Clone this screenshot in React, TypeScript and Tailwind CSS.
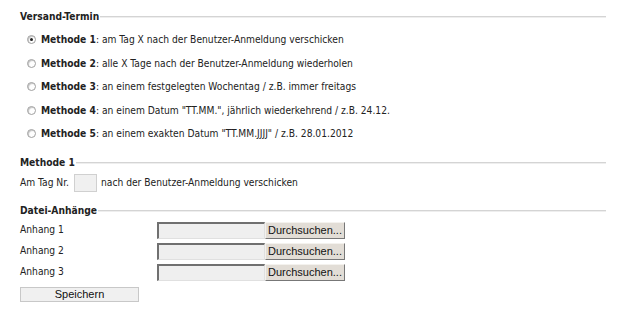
import React, { useState } from 'react';

const methods = [
  { n: 1, text: 'am Tag X nach der Benutzer-Anmeldung verschicken' },
  { n: 2, text: 'alle X Tage nach der Benutzer-Anmeldung wiederholen' },
  { n: 3, text: 'an einem festgelegten Wochentag / z.B. immer freitags' },
  { n: 4, text: 'an einem Datum "TT.MM.", jährlich wiederkehrend / z.B. 24.12.' },
  { n: 5, text: 'an einem exakten Datum "TT.MM.JJJJ" / z.B. 28.01.2012' },
];

function Legend({ title, className = '' }: { title: string; className?: string }) {
  return (
    <div className={`flex items-center h-[14px] ${className}`}>
      <span className="font-bold text-[#222]">{title}</span>
      <div className="flex-1 h-[2px] border-t border-[#d4d4d4] bg-[#eee] ml-px" />
    </div>
  );
}

function Radio({ checked }: { checked: boolean }) {
  return (
    <span className="w-[9px] h-[9px] rounded-full border border-[#a0a0a0] bg-white flex items-center justify-center shrink-0 shadow-[inset_1px_1px_1px_#c4c4c4]">
      {checked && <span className="w-[3px] h-[3px] rounded-full bg-[#222]" />}
    </span>
  );
}

export default function App() {
  const [method, setMethod] = useState(1);

  return (
    <div
      className="w-[624px] h-[326px] bg-white text-[10.2px] text-[#222] pl-5 pr-[18px] pt-[10px]"
      style={{ fontFamily: '"DejaVu Sans Condensed", "DejaVu Sans", Verdana, sans-serif' }}
    >
      <Legend title="Versand-Termin" />

      <div className="flex flex-col mt-[4px] pl-[7px]">
        {methods.map((m) => (
          <label key={m.n} className="flex items-center h-[23.5px] cursor-pointer" onClick={() => setMethod(m.n)}>
            <Radio checked={method === m.n} />
            <span className="ml-[5px]">
              <b>Methode {m.n}</b>: {m.text}
            </span>
          </label>
        ))}
      </div>

      <Legend title="Methode 1" className="mt-[10.5px]" />

      <div className="flex items-center mt-[4px] h-[18px]">
        <span>Am Tag Nr.</span>
        <input className="w-[23px] h-[18px] ml-[5px] mr-[4px] border border-[#d0d0d0] bg-[#f0f0f0] outline-none" />
        <span>nach der Benutzer-Anmeldung verschicken</span>
      </div>

      <Legend title="Datei-Anhänge" className="mt-[12px]" />

      <div className="flex flex-col mt-[1.5px]">
        {[1, 2, 3].map((i) => (
          <div key={i} className="flex items-center h-[21px]">
            <span className="w-[137px]">Anhang {i}</span>
            <div className="w-[108px] h-[17px] bg-[#efefef] border-t-2 border-l-2 border-[#707070] border-b border-r border-b-[#e0e0e0] border-r-[#e0e0e0]" />
            <button
              className="w-[80px] h-[17px] bg-[#e2ddd6] border border-[#f4f2ee] border-r-[#777] border-b-[#777] text-[11px] leading-none text-[#111]"
              style={{ fontFamily: '"Liberation Sans", Arial, sans-serif' }}
            >
              Durchsuchen...
            </button>
          </div>
        ))}
      </div>

      <button
        className="block mt-[4.5px] w-[119px] h-[15px] bg-[#f0f0f0] border border-[#c8c8c8] text-[11px] leading-none text-[#111]"
        style={{ fontFamily: '"Liberation Sans", Arial, sans-serif' }}
      >
        Speichern
      </button>
    </div>
  );
}
